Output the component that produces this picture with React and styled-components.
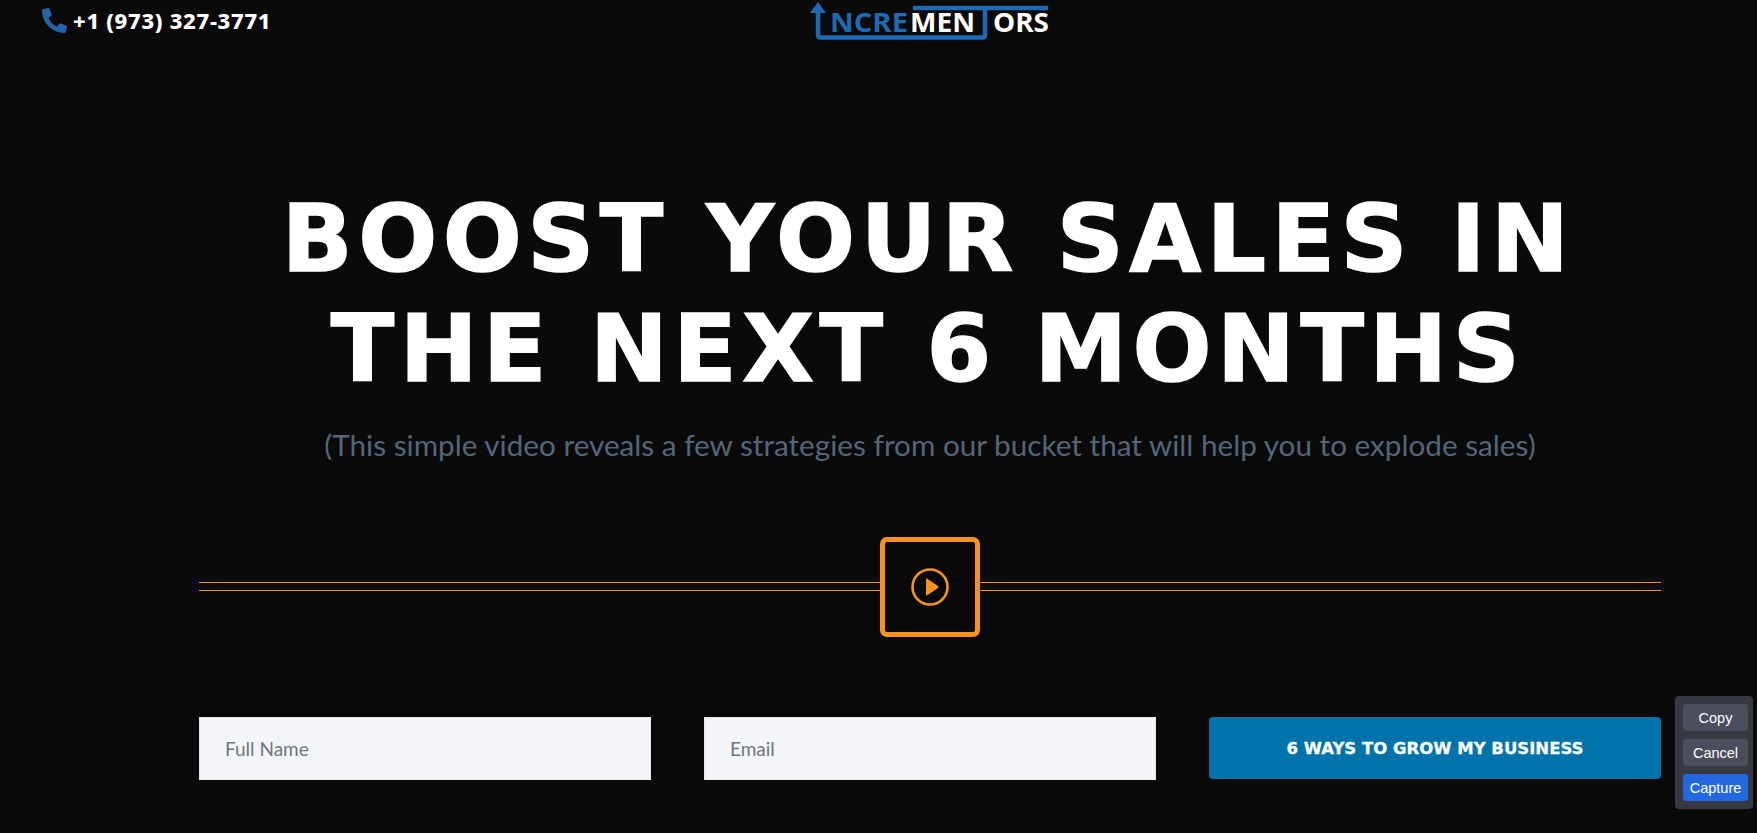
import React from 'react';
import styled, { createGlobalStyle } from 'styled-components';
import { FaPhoneAlt } from 'react-icons/fa';

const GlobalStyle = createGlobalStyle`
  html, body {
    margin: 0;
    height: 100%;
    overflow: hidden;
    background: #0a0a0a;
  }
  * { box-sizing: border-box; }
`;

const Page = styled.div`
  height: 833px;
  background: #0a0a0a;
  font-family: "Lato", "Liberation Sans", sans-serif;
`;

const Header = styled.header`
  display: grid;
  grid-template-columns: 768px auto;
  align-items: start;
  height: 50px;
  padding-left: 42px;
`;

const PhoneLink = styled.a`
  display: flex;
  align-items: center;
  gap: 6px;
  height: 40px;
  color: #fff;
  font-family: "Noto Sans", "Liberation Sans", sans-serif;
  font-size: 22px;
  font-weight: 800;
  letter-spacing: 0.7px;
  text-decoration: none;
  svg { flex: none; color: #2563a8; }
`;

const Main = styled.main`
  padding: 134px 96px 0 199px;
`;

const Headline = styled.h1`
  margin: 0 0 0 -4px;
  font-family: "DejaVu Sans", "Liberation Sans", sans-serif;
  font-size: 93px;
  line-height: 110px;
  font-weight: 700;
  letter-spacing: 5.5px;
  -webkit-text-stroke: 1.5px #fff;
  text-align: center;
  color: #fff;
`;

const Sub = styled.p`
  margin: 21px 0 0;
  font-size: 29.7px;
  line-height: 40px;
  font-weight: 400;
  text-align: center;
  color: #526779;
`;

const VideoRow = styled.div`
  display: flex;
  align-items: center;
  margin-top: 72px;
`;

const DoubleLine = styled.div`
  flex: 1;
  height: 9px;
  margin-bottom: 2px;
  border-top: 1px solid #f7931e;
  border-bottom: 1px solid #f7931e;
`;

const PlayBox = styled.button`
  flex: none;
  display: flex;
  align-items: center;
  justify-content: center;
  width: 100px;
  height: 100px;
  padding: 0;
  background: transparent;
  border: 5px solid #f7931e;
  border-radius: 7px;
  color: #f7931e;
`;

const Form = styled.form`
  display: grid;
  grid-template-columns: repeat(3, 452px);
  column-gap: 53px;
  margin-top: 80px;
`;

const Field = styled.input`
  height: 63px;
  padding: 0 25px;
  background: #f3f5f8;
  border: 1px solid #e5e9ee;
  border-radius: 0;
  font-family: inherit;
  font-size: 19px;
  &::placeholder { color: #6f7780; opacity: 1; }
`;

const Submit = styled.button`
  height: 62px;
  background: #0073aa;
  border: 0;
  border-radius: 4px;
  color: #fff;
  font-family: "DejaVu Sans", "Liberation Sans", sans-serif;
  font-size: 16.5px;
  font-weight: 700;
  -webkit-text-stroke: 0.3px #fff;
`;

const CapturePanel = styled.div`
  position: fixed;
  left: 1675px;
  top: 696px;
  width: 78px;
  display: flex;
  flex-direction: column;
  gap: 8px;
  padding: 8px 5px 8px 8px;
  background: #363842;
  border-radius: 4px;
`;

const CaptureButton = styled.button`
  height: 27px;
  padding: 0;
  background: ${p => (p.$primary ? '#2368e0' : '#4b4e5c')};
  border: 0;
  border-radius: 3px;
  color: #fff;
  font-family: "Liberation Sans", Arial, sans-serif;
  font-size: 14.5px;
`;

const Logo = () => (
  <svg width="240" height="42" viewBox="0 0 240 42">
    <path d="M0 13 L8 2 L16 13 Z" fill="#1f6bb3" />
    <path
      d="M8 10 V35 Q8 37.5 10.5 37.5 H172.5 Q175 37.5 175 35 V8 M103 8 H238"
      fill="none"
      stroke="#1f6bb3"
      strokeWidth="4.5"
    />
    <text x="20" y="32" fontFamily="Open Sans" fontWeight="700" fontSize="26" fill="#1f6bb3" textLength="78" lengthAdjust="spacingAndGlyphs">NCRE</text>
    <text x="100" y="32" fontFamily="Open Sans" fontWeight="700" fontSize="26" fill="#fff" textLength="65" lengthAdjust="spacingAndGlyphs">MEN</text>
    <text x="183" y="32" fontFamily="Open Sans" fontWeight="700" fontSize="26" fill="#fff" textLength="56" lengthAdjust="spacingAndGlyphs">ORS</text>
  </svg>
);

const PlayIcon = () => (
  <svg width="38" height="38" viewBox="0 0 38 38">
    <circle cx="19" cy="19" r="17.5" fill="none" stroke="#f7931e" strokeWidth="2.6" />
    <path d="M15 11.5 V26.5 Q15 28 16.2 27.2 L27 20 Q28 19 27 18 L16.2 10.8 Q15 10 15 11.5 Z" fill="#f7931e" />
  </svg>
);

export default function App() {
  return (
    <Page>
      <GlobalStyle />
      <Header>
        <PhoneLink href="#">
          <FaPhoneAlt size={25} />
          +1 (973) 327-3771
        </PhoneLink>
        <Logo />
      </Header>
      <Main>
        <Headline>
          BOOST YOUR SALES IN
          <br />
          THE NEXT 6 MONTHS
        </Headline>
        <Sub>(This simple video reveals a few strategies from our bucket that will help you to explode sales)</Sub>
        <VideoRow>
          <DoubleLine />
          <PlayBox type="button" aria-label="Play">
            <PlayIcon />
          </PlayBox>
          <DoubleLine />
        </VideoRow>
        <Form>
          <Field placeholder="Full Name" />
          <Field placeholder="Email" />
          <Submit type="button">6 WAYS TO GROW MY BUSINESS</Submit>
        </Form>
      </Main>
      <CapturePanel>
        <CaptureButton>Copy</CaptureButton>
        <CaptureButton>Cancel</CaptureButton>
        <CaptureButton $primary>Capture</CaptureButton>
      </CapturePanel>
    </Page>
  );
}
